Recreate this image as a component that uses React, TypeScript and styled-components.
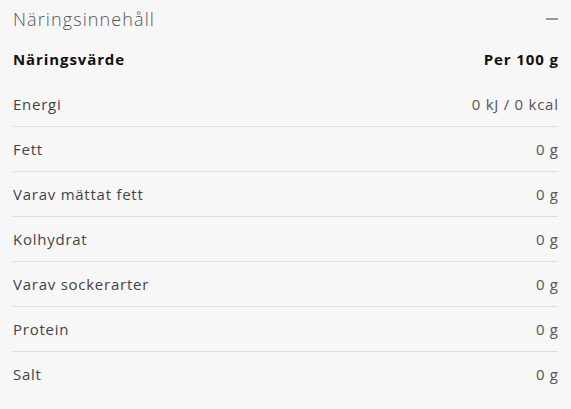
import React, { FC } from 'react';
import styled, { createGlobalStyle } from 'styled-components';

const GlobalStyle = createGlobalStyle`
  html, body {
    margin: 0;
    padding: 0;
    background: #f7f7f7;
  }
  body {
    font-family: "Open Sans", "Liberation Sans", sans-serif;
    color: #333;
  }
`;

const Panel = styled.section`
  width: 571px;
  padding: 0 13px;
  box-sizing: border-box;
  background: #f7f7f7;
`;

const TitleBar = styled.div`
  height: 38px;
  display: flex;
  align-items: center;
  justify-content: space-between;
`;

const Title = styled.h2`
  margin: 0;
  font-size: 18px;
  font-weight: 300;
  color: #555;
  letter-spacing: 1.1px;
`;

const Collapse = styled.span`
  width: 12px;
  height: 2px;
  background: #999;
`;

const Row = styled.div<{ $head?: boolean }>`
  height: ${p => (p.$head ? 42 : 43)}px;
  padding-bottom: ${p => (p.$head ? 2 : 1)}px;
  display: flex;
  align-items: center;
  justify-content: space-between;
  font-size: 15px;
  font-weight: ${p => (p.$head ? 700 : 400)};
  letter-spacing: ${p => (p.$head ? 0.9 : 0.75)}px;
  color: ${p => (p.$head ? '#111' : '#444')};
  border-bottom: ${p => (p.$head ? 'none' : '1px solid #dedede')};

  & > span:last-child {
    color: ${p => (p.$head ? '#111' : '#555')};
    margin-right: ${p => (p.$head ? -0.9 : -0.75)}px;
  }

  &:last-child {
    border-bottom: none;
  }
`;

const rows: [string, string][] = [
  ['Energi', '0 kJ / 0 kcal'],
  ['Fett', '0 g'],
  ['Varav mättat fett', '0 g'],
  ['Kolhydrat', '0 g'],
  ['Varav sockerarter', '0 g'],
  ['Protein', '0 g'],
  ['Salt', '0 g'],
];

const App: FC = () => {
  return (
    <>
      <GlobalStyle />
      <Panel>
        <TitleBar>
          <Title>Näringsinnehåll</Title>
          <Collapse />
        </TitleBar>
        <Row $head>
          <span>Näringsvärde</span>
          <span>Per 100 g</span>
        </Row>
        <div>
          {rows.map(([name, value]) => (
            <Row key={name}>
              <span>{name}</span>
              <span>{value}</span>
            </Row>
          ))}
        </div>
      </Panel>
    </>
  );
};

export default App;
